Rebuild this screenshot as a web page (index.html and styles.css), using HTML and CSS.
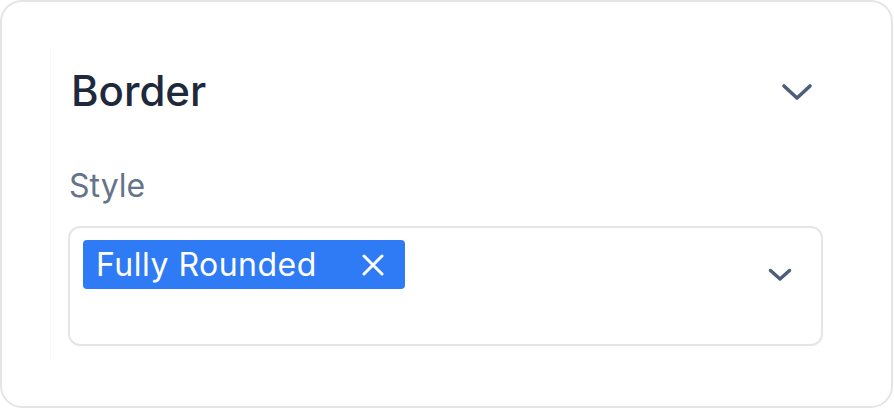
FILE: index.html
```html
<!DOCTYPE html>
<html lang="en">
<head>
<meta charset="utf-8">
<link rel="stylesheet" href="styles.css">
</head>
<body>
<div class="card">
  <div class="panel">
    <div class="header">
      <h2 class="title">Border</h2>
      <svg class="chev-lg" width="32" height="20" viewBox="0 0 32 20"><path d="M3 4 L16 16 L29 4" fill="none" stroke="#4d5d7a" stroke-width="3.6" stroke-linecap="round" stroke-linejoin="round"/></svg>
    </div>
    <div class="label">Style</div>
    <div class="select">
      <div class="tags">
        <span class="tag">Fully Rounded<svg class="x" width="24" height="24" viewBox="0 0 24 24"><path d="M3 3 L21 21 M21 3 L3 21" fill="none" stroke="#fff" stroke-width="3" stroke-linecap="round"/></svg></span>
      </div>
      <svg class="chev-sm" width="24" height="14" viewBox="0 0 24 14"><path d="M2.5 2.5 L12 11 L21.5 2.5" fill="none" stroke="#4d5d7a" stroke-width="3.4" stroke-linecap="round" stroke-linejoin="round"/></svg>
    </div>
  </div>
</div>
</body>
</html>
```
FILE: styles.css
```css
* { box-sizing: border-box; }
html, body { margin: 0; padding: 0; background: #fff; }
body {
  font-family: Inter, "Noto Sans", sans-serif;
}
.card {
  width: 893px;
  height: 408px;
  border: 2px solid #e3e5e9;
  border-radius: 22px;
  padding: 45px 50px 45px 48px;
  background: #fff;
}
.panel {
  height: 313px;
  border-left: 1px solid #f6f7f9;
  padding: 20px 18px 14px 17px;
}
.header {
  display: flex;
  align-items: center;
  justify-content: space-between;
  height: 48px;
  padding-left: 3px;
  padding-right: 10px;
}
.title {
  margin: 0;
  font-size: 42px;
  line-height: 48px;
  font-weight: 500;
  color: #1e293b;
}
.chev-lg { display: block; margin-top: 2px; }
.label {
  margin-top: 53px;
  font-size: 32px;
  line-height: 36px;
  color: #64748b;
  font-weight: 400;
  padding-left: 1px;
}
.select {
  margin-top: 22px;
  height: 120px;
  border: 2px solid #e3e5e9;
  border-radius: 12px;
  padding: 12px 29px 12px 13px;
  display: flex;
  justify-content: space-between;
  align-items: flex-start;
}
.tag {
  display: inline-flex;
  align-items: center;
  height: 49px;
  background: #2f7bf6;
  color: #fff;
  border-radius: 4px;
  padding: 0 20px 0 13px;
  font-size: 32px;
  letter-spacing: 0.5px;
  font-weight: 400;
  gap: 44px;
}
.x { display: block; }
.chev-sm { display: block; margin-top: 28px; }
```
